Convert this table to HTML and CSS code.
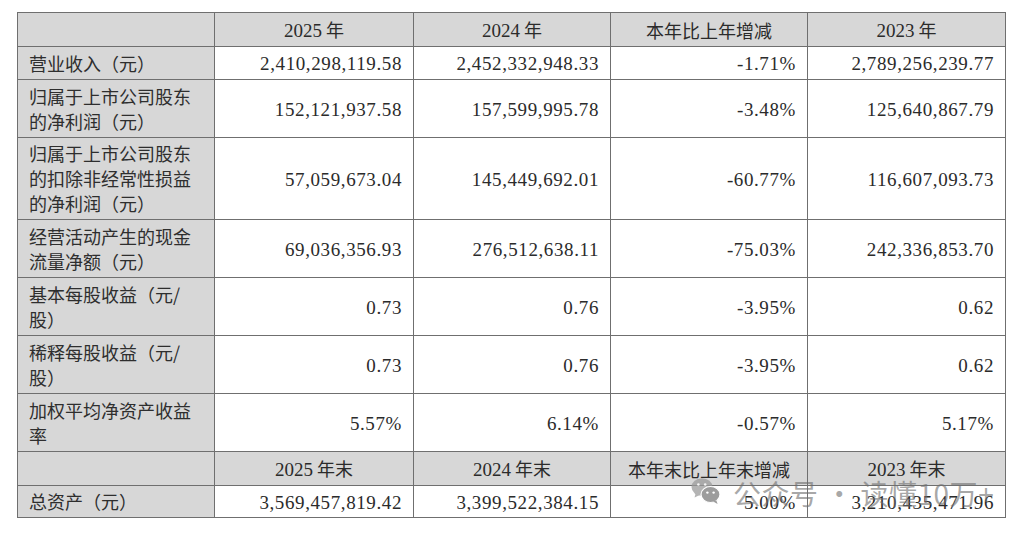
FILE: index.html
```html
<!DOCTYPE html>
<html lang="zh-CN">
<head>
<meta charset="utf-8">
<title>主要会计数据和财务指标</title>
<link rel="stylesheet" href="styles.css">
</head>
<body>
<div class="page">
  <div class="sheet">
    <table class="fin">
      <colgroup>
        <col class="c-label">
        <col class="c-a">
        <col class="c-b">
        <col class="c-c">
        <col class="c-d">
      </colgroup>
      <tr class="head">
        <td class="label"></td>
        <td class="hd"><span class="num">2025</span> 年</td>
        <td class="hd"><span class="num">2024</span> 年</td>
        <td class="hd">本年比上年增减</td>
        <td class="hd"><span class="num">2023</span> 年</td>
      </tr>
      <tr class="single">
        <td class="label">营业收入（元）</td>
        <td class="val">2,410,298,119.58</td>
        <td class="val">2,452,332,948.33</td>
        <td class="val">-1.71%</td>
        <td class="val">2,789,256,239.77</td>
      </tr>
      <tr class="double">
        <td class="label">归属于上市公司股东<br>的净利润（元）</td>
        <td class="val">152,121,937.58</td>
        <td class="val">157,599,995.78</td>
        <td class="val">-3.48%</td>
        <td class="val">125,640,867.79</td>
      </tr>
      <tr class="triple">
        <td class="label">归属于上市公司股东<br>的扣除非经常性损益<br>的净利润（元）</td>
        <td class="val">57,059,673.04</td>
        <td class="val">145,449,692.01</td>
        <td class="val">-60.77%</td>
        <td class="val">116,607,093.73</td>
      </tr>
      <tr class="double">
        <td class="label">经营活动产生的现金<br>流量净额（元）</td>
        <td class="val">69,036,356.93</td>
        <td class="val">276,512,638.11</td>
        <td class="val">-75.03%</td>
        <td class="val">242,336,853.70</td>
      </tr>
      <tr class="double">
        <td class="label">基本每股收益（元/<br>股）</td>
        <td class="val">0.73</td>
        <td class="val">0.76</td>
        <td class="val">-3.95%</td>
        <td class="val">0.62</td>
      </tr>
      <tr class="double">
        <td class="label">稀释每股收益（元/<br>股）</td>
        <td class="val">0.73</td>
        <td class="val">0.76</td>
        <td class="val">-3.95%</td>
        <td class="val">0.62</td>
      </tr>
      <tr class="double">
        <td class="label">加权平均净资产收益<br>率</td>
        <td class="val">5.57%</td>
        <td class="val">6.14%</td>
        <td class="val">-0.57%</td>
        <td class="val">5.17%</td>
      </tr>
      <tr class="head">
        <td class="label"></td>
        <td class="hd"><span class="num">2025</span> 年末</td>
        <td class="hd"><span class="num">2024</span> 年末</td>
        <td class="hd">本年末比上年末增减</td>
        <td class="hd"><span class="num">2023</span> 年末</td>
      </tr>
      <tr class="last">
        <td class="label">总资产（元）</td>
        <td class="val">3,569,457,819.42</td>
        <td class="val">3,399,522,384.15</td>
        <td class="val">5.00%</td>
        <td class="val">3,210,435,471.96</td>
      </tr>
    </table>

    <div class="watermark">
      <svg class="wm-icon" viewBox="0 0 30 28" width="30" height="28" aria-hidden="true">
        <ellipse cx="11" cy="10" rx="10.5" ry="8.8" fill="#9c9c9c"/>
        <path d="M4.5 16.5 L3.6 20.6 L8.6 18 Z" fill="#9c9c9c"/>
        <ellipse cx="19.5" cy="17.5" rx="9.5" ry="8" fill="#7c7c7c" stroke="#fff" stroke-width="1.2"/>
        <path d="M25.2 23.2 L26.6 27 L22.2 24.6 Z" fill="#7c7c7c"/>
        <circle cx="7.4" cy="7.6" r="1.3" fill="#fff"/>
        <circle cx="14.2" cy="7.6" r="1.3" fill="#fff"/>
        <circle cx="16.4" cy="15.6" r="1.2" fill="#fff"/>
        <circle cx="22.6" cy="15.6" r="1.2" fill="#fff"/>
      </svg>
      <span class="wm-text">公众号 · 读懂10万+</span>
    </div>
  </div>
</div>
</body>
</html>
```

FILE: styles.css
```css
html, body {
  margin: 0;
  padding: 0;
  background: #ffffff;
}

.page {
  width: 1024px;
  height: 534px;
  padding: 12px 0 0 17px;
  box-sizing: border-box;
  overflow: hidden;
}

.sheet {
  position: relative;
  width: 988px;
}

.fin {
  border-collapse: collapse;
  table-layout: fixed;
  width: 988px;
  font-family: "Noto Sans CJK SC", sans-serif;
  font-size: 18px;
  color: #2b2b2b;
}

.c-label { width: 197px; }
.c-a { width: 199px; }
.c-b { width: 197px; }
.c-c { width: 197px; }
.c-d { width: 198px; }

.fin td {
  border: 1px solid #6f6f6f;
  padding: 0 11px;
  line-height: 25px;
  vertical-align: middle;
  white-space: nowrap;
}

.fin tr.head { height: 34px; }
.fin tr.single { height: 33px; }
.fin tr.double { height: 58px; }
.fin tr.triple { height: 82px; }
.fin tr.last { height: 32px; }

.fin td.label {
  background: #d7d7d7;
  text-align: left;
  color: #2e2e2e;
}

.fin tr.head td {
  background: #d7d7d7;
  padding-top: 1px;
}

.fin td.hd {
  text-align: center;
}

.num {
  font-family: "Liberation Serif", "Times New Roman", serif;
  font-size: 19px;
  line-height: 25px;
}

.fin td.val {
  text-align: right;
  font-family: "Liberation Serif", "Times New Roman", serif;
  font-size: 19px;
  letter-spacing: 0.6px;
  background: #ffffff;
  padding-top: 1px;
}

.watermark {
  position: absolute;
  left: 674px;
  top: 459px;
  display: flex;
  align-items: center;
  gap: 12px;
  pointer-events: none;
}

.wm-icon {
  display: block;
  opacity: 0.75;
}

.wm-text {
  font-family: "Noto Sans CJK SC", sans-serif;
  font-size: 28px;
  line-height: 36px;
  color: rgba(110, 110, 110, 0.6);
  letter-spacing: 0.5px;
  margin-top: 4px;
}
```
